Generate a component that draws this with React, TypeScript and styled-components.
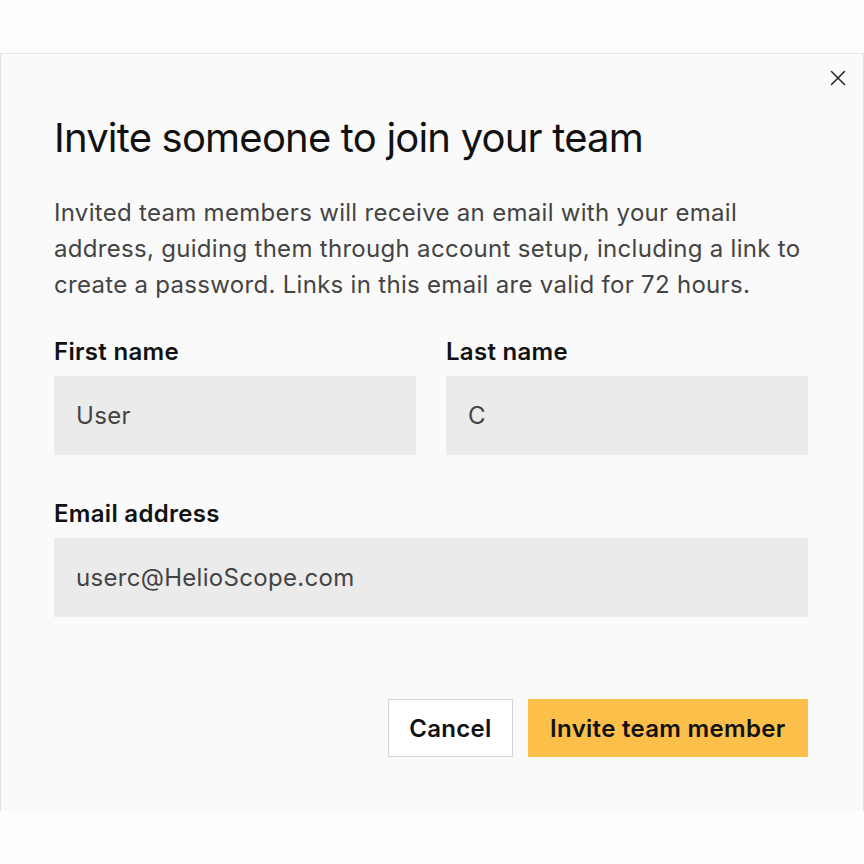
import React from "react";
import styled, { createGlobalStyle } from "styled-components";

const GlobalStyle = createGlobalStyle`
  html, body {
    margin: 0;
    padding: 0;
    background: #fdfdfd;
  }
  body {
    font-family: Inter, "Noto Sans", sans-serif;
    -webkit-font-smoothing: antialiased;
  }
`;

export default function App() {
  return (
    <>
      <GlobalStyle />
      <Page>
        <Dialog>
          <CloseButton aria-label="Close">
            <svg width="16" height="16" viewBox="0 0 16 16">
              <path d="M1.5 1.5 L14.5 14.5 M14.5 1.5 L1.5 14.5" stroke="#222" strokeWidth="1.5" strokeLinecap="round" />
            </svg>
          </CloseButton>
          <Title>Invite someone to join your team</Title>
          <Description>
            Invited team members will receive an email with your email address, guiding them through
            account setup, including a link to create a password. Links in this email are valid for 72
            hours.
          </Description>
          <FieldRow>
            <Field>
              <Label>First name</Label>
              <Input defaultValue="User" />
            </Field>
            <Field>
              <Label>Last name</Label>
              <Input defaultValue="C" />
            </Field>
          </FieldRow>
          <Field>
            <Label>Email address</Label>
            <Input defaultValue="userc@HelioScope.com" />
          </Field>
          <Actions>
            <Button>Cancel</Button>
            <Button $primary>Invite team member</Button>
          </Actions>
        </Dialog>
      </Page>
    </>
  );
}

const Page = styled.div`
  padding-top: 53px;
  height: 864px;
  box-sizing: border-box;
`;

const Dialog = styled.div`
  position: relative;
  height: 758px;
  box-sizing: border-box;
  background: #fafafa;
  border: 1px solid #e4e4e4;
  border-bottom: none;
  padding: 60px 55px 0 53px;
  display: flex;
  flex-direction: column;
`;

const CloseButton = styled.button`
  position: absolute;
  top: 14px;
  right: 15px;
  width: 20px;
  height: 20px;
  padding: 0;
  border: none;
  background: none;
  display: flex;
  align-items: center;
  justify-content: center;
  cursor: pointer;
`;

const Title = styled.h1`
  margin: 0;
  font-size: 40px;
  line-height: 48px;
  font-weight: 400;
  letter-spacing: -0.8px;
  color: #111;
`;

const Description = styled.p`
  margin: 33px 0 0;
  font-size: 24px;
  line-height: 36px;
  color: #444;
  letter-spacing: 0.3px;
`;

const FieldRow = styled.div`
  display: grid;
  grid-template-columns: minmax(0, 1fr) minmax(0, 1fr);
  gap: 30px;
  margin-top: 35px;
`;

const Field = styled.div`
  display: flex;
  flex-direction: column;
  min-width: 0;
  ${FieldRow} + & {
    margin-top: 45px;
  }
`;

const Label = styled.label`
  font-size: 24px;
  line-height: 28px;
  font-weight: 600;
  letter-spacing: 0.3px;
  color: #111;
  margin-bottom: 10px;
`;

const Input = styled.input`
  width: 100%;
  min-width: 0;
  height: 79px;
  box-sizing: border-box;
  border: none;
  background: #ebebeb;
  padding: 0 22px;
  font-family: Inter, "Noto Sans", sans-serif;
  font-size: 24px;
  letter-spacing: 0.3px;
  color: #444;
  outline: none;
`;

const Actions = styled.div`
  display: flex;
  justify-content: flex-end;
  gap: 15px;
  margin-top: 82px;
`;

const Button = styled.button<{ $primary?: boolean }>`
  height: 58px;
  box-sizing: border-box;
  padding: 0 ${(p) => (p.$primary ? "21.5px" : "20px")};
  border: 1px solid ${(p) => (p.$primary ? "#fbbf4a" : "#d4d4d4")};
  background: ${(p) => (p.$primary ? "#fbbf4a" : "#ffffff")};
  font-family: Inter, "Noto Sans", sans-serif;
  font-size: 24px;
  font-weight: 600;
  letter-spacing: 0.3px;
  color: #111;
  cursor: pointer;
`;
